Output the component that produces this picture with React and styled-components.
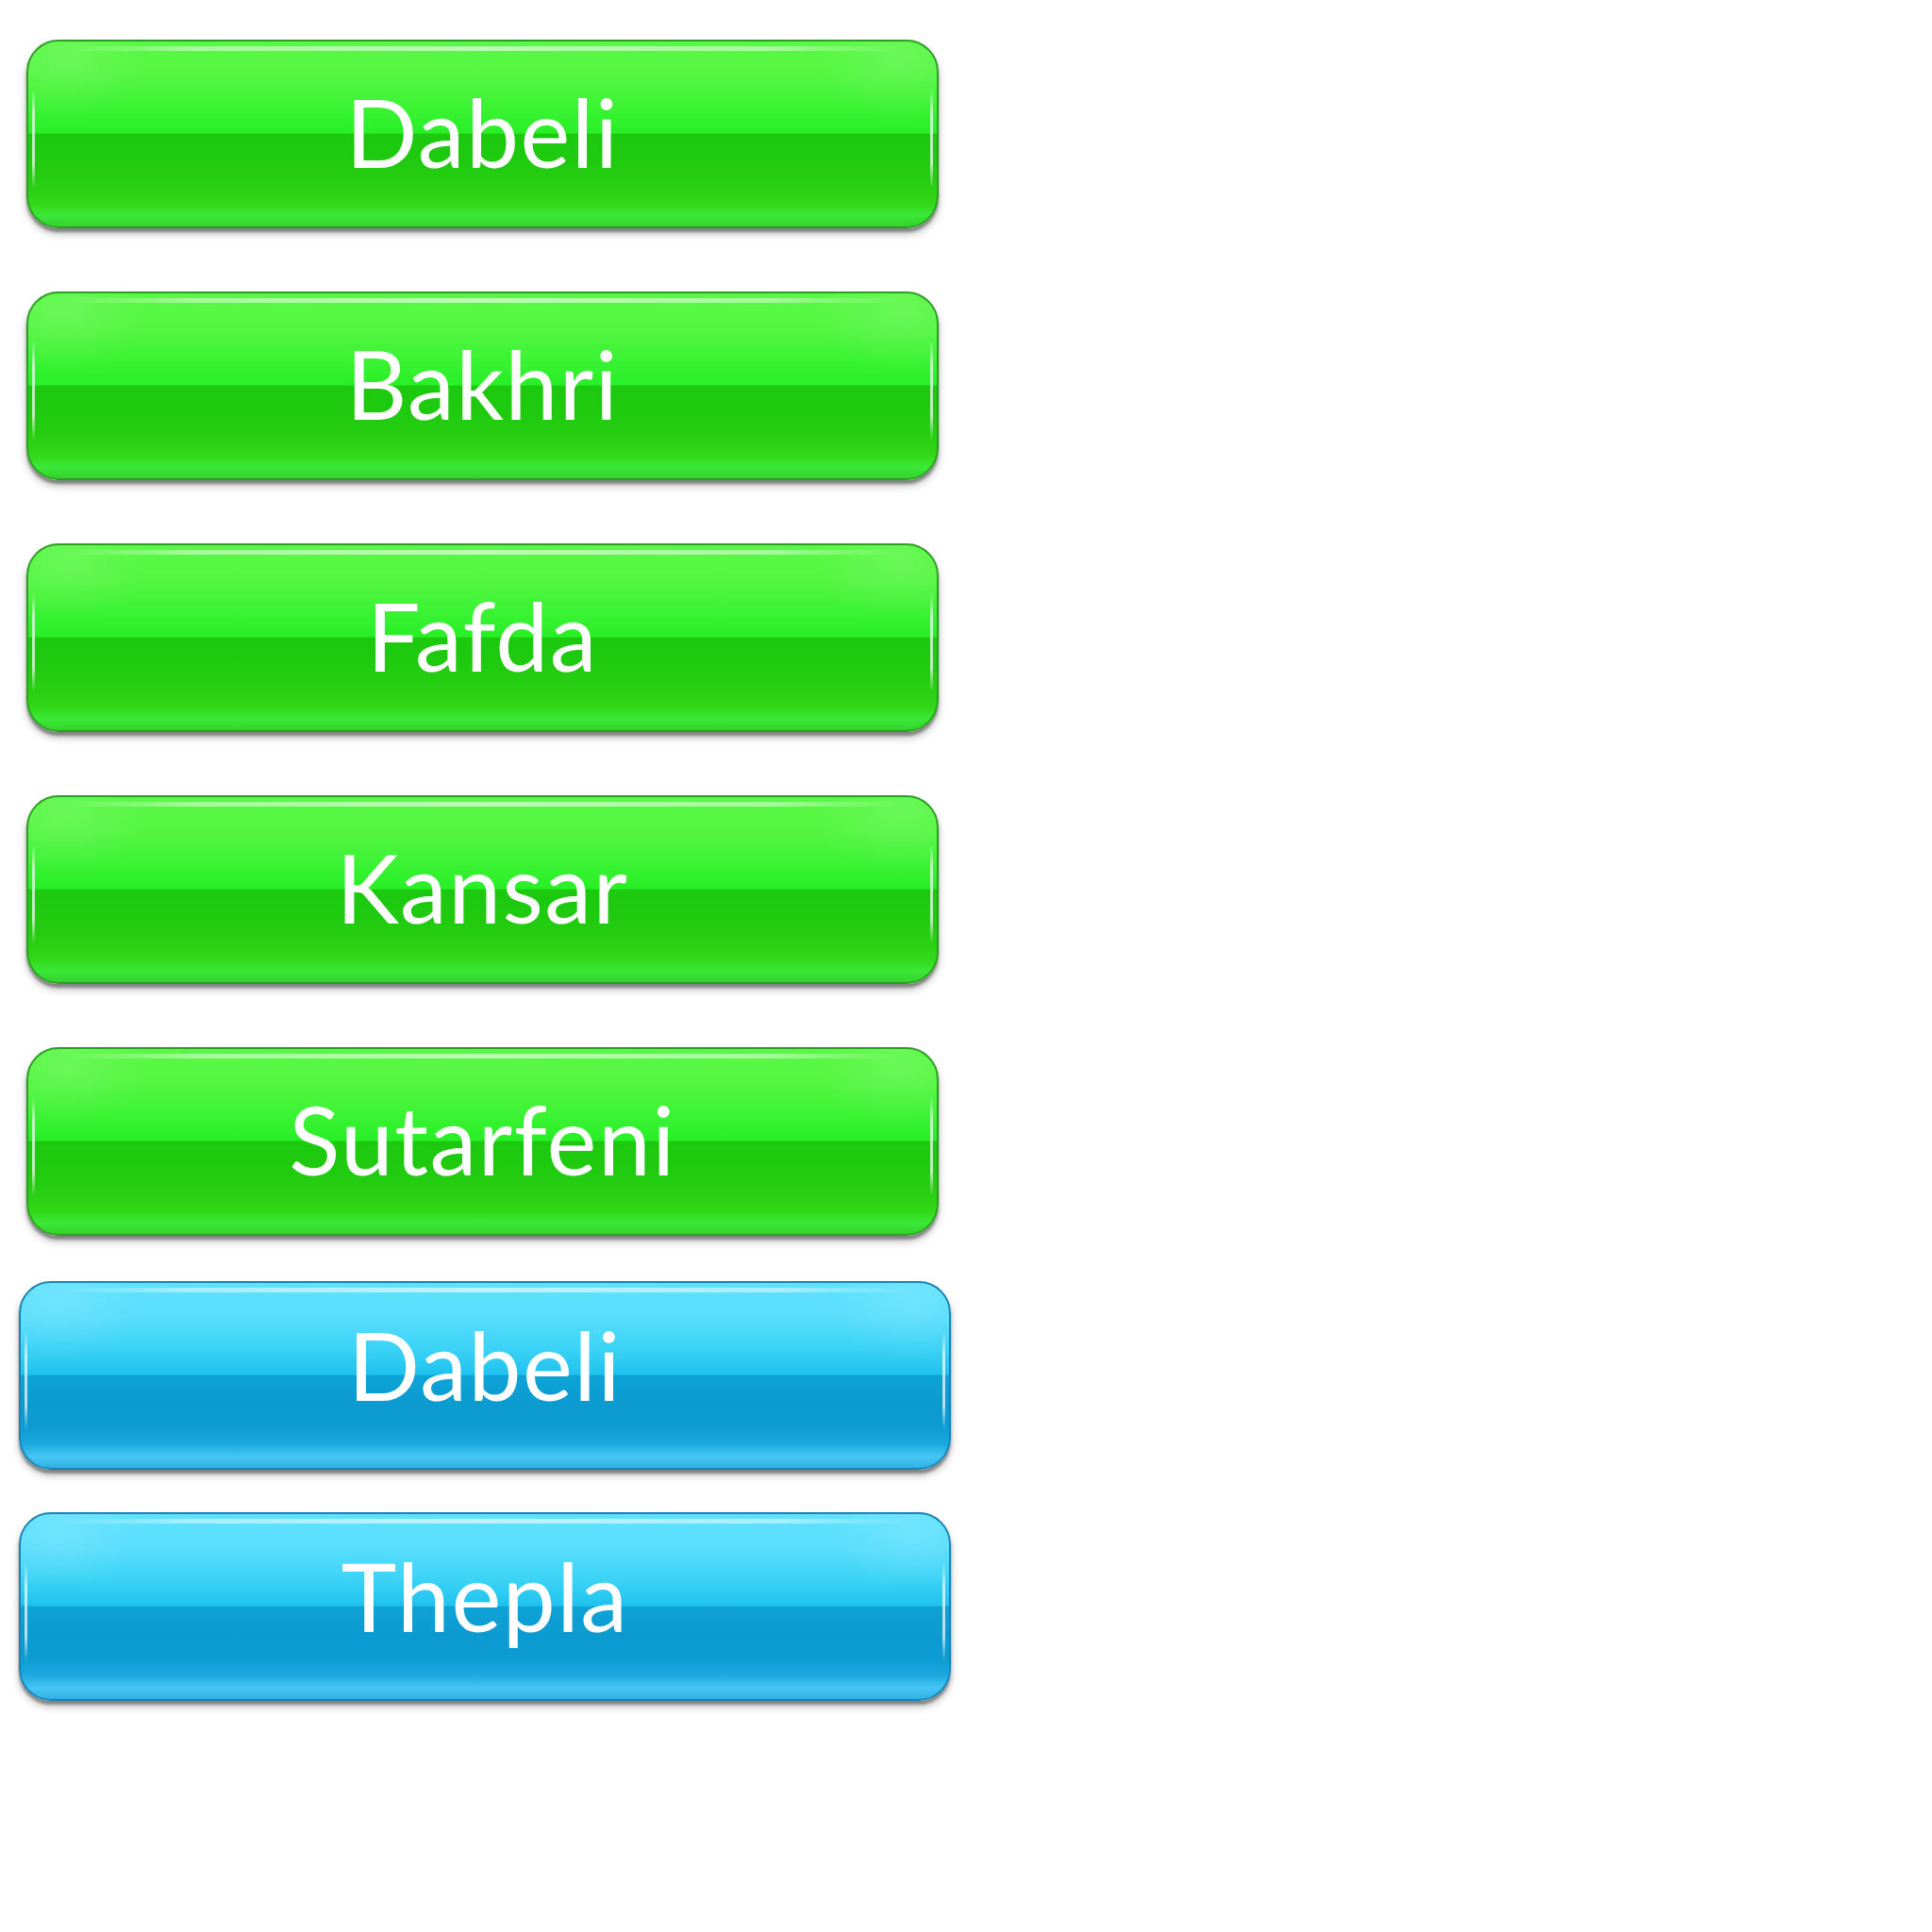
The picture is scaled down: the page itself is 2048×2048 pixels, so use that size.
import React from "react";
import styled, { createGlobalStyle, css } from "styled-components";

const Global = createGlobalStyle`
  html, body { margin: 0; padding: 0; background: #ffffff; }
  body { font-family: Lato, "Open Sans", sans-serif; }
`;

const Page = styled.div`
  display: flex;
  flex-direction: column;
  padding-top: 42px;
  width: 2048px;
  min-height: 2048px;
  box-sizing: border-box;
`;

const Group = styled.div`
  display: flex;
  flex-direction: column;
  gap: ${(p) => p.$gap}px;
  margin-left: ${(p) => p.$left}px;
  margin-top: ${(p) => p.$top || 0}px;
`;

const palettes = {
  green: css`
    border: 2px solid #2c9e22;
    background:
      radial-gradient(ellipse 120px 90px at 40px 20px, rgba(255,255,255,0.1), rgba(255,255,255,0) 70%),
      radial-gradient(ellipse 120px 90px at calc(100% - 40px) 20px, rgba(255,255,255,0.1), rgba(255,255,255,0) 70%),
      linear-gradient(
        to bottom,
        #5af846 0%,
        #55f642 18%,
        #3cf334 35%,
        #27ef26 49.6%,
        #1cc90e 50%,
        #1fca0f 65%,
        #2ad012 80%,
        #32d918 88%,
        #3ce838 94%,
        #34d22c 100%
      );
  `,
  blue: css`
    border: 2px solid #1884b6;
    background:
      radial-gradient(ellipse 120px 90px at 40px 20px, rgba(255,255,255,0.12), rgba(255,255,255,0) 70%),
      radial-gradient(ellipse 120px 90px at calc(100% - 40px) 20px, rgba(255,255,255,0.12), rgba(255,255,255,0) 70%),
      linear-gradient(
        to bottom,
        #5fe2fd 0%,
        #58defc 18%,
        #3cd3f6 35%,
        #1fc2ee 49.6%,
        #0ea3d6 50%,
        #0b9bd0 65%,
        #0c9cd1 78%,
        #1ba8de 87%,
        #45c6f5 94%,
        #32b0e4 100%
      );
  `,
};

const Button = styled.button`
  position: relative;
  box-sizing: border-box;
  width: ${(p) => p.$width}px;
  height: 200px;
  border-radius: 34px;
  padding: 0;
  margin: 0;
  display: flex;
  align-items: center;
  justify-content: center;
  cursor: pointer;
  color: #ffffff;
  font-family: Lato, "Open Sans", sans-serif;
  font-weight: 400;
  font-size: 100px;
  letter-spacing: 1.5px;
  line-height: 1;
  box-shadow: 0 4px 3px rgba(0, 0, 0, 0.35), 0 6px 8px rgba(0, 0, 0, 0.25);
  ${(p) => palettes[p.$tone]}

  &::before {
    content: "";
    position: absolute;
    top: 5px;
    left: 40px;
    right: 40px;
    height: 5px;
    border-radius: 3px;
    background: linear-gradient(
      to right,
      rgba(255, 255, 255, 0),
      rgba(255, 255, 255, 0.45) 15%,
      rgba(255, 255, 255, 0.6) 50%,
      rgba(255, 255, 255, 0.45) 85%,
      rgba(255, 255, 255, 0)
    );
  }

  &::after {
    content: "";
    position: absolute;
    top: 50px;
    bottom: 40px;
    left: 4px;
    right: 4px;
    border-left: 3px solid rgba(255, 255, 255, 0.7);
    border-right: 3px solid rgba(255, 255, 255, 0.7);
    pointer-events: none;
    -webkit-mask-image: linear-gradient(to bottom, transparent, #000 25%, #000 75%, transparent);
    mask-image: linear-gradient(to bottom, transparent, #000 25%, #000 75%, transparent);
  }
`;

const Label = styled.span`
  position: relative;
  display: block;
  transform: translateY(${(p) => p.$shift || 0}px);
`;

const greens = ["Dabeli", "Bakhri", "Fafda", "Kansar", "Sutarfeni"];
const blues = ["Dabeli", "Thepla"];

export default function App() {
  return (
    <>
      <Global />
      <Page>
        <Group $gap={67} $left={28}>
          {greens.map((t) => (
            <Button key={t} $tone="green" $width={967}>
              <Label $shift={-3}>{t}</Label>
            </Button>
          ))}
        </Group>
        <Group $gap={45} $left={20} $top={48}>
          {blues.map((t) => (
            <Button key={t} $tone="blue" $width={988}>
              <Label $shift={-12}>{t}</Label>
            </Button>
          ))}
        </Group>
      </Page>
    </>
  );
}
